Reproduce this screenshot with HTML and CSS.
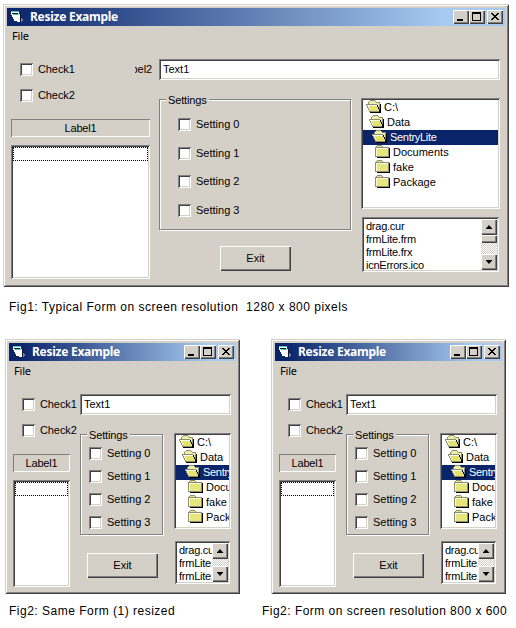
FILE: index.html
```html
<!DOCTYPE html>
<html lang="en">
<head>
<meta charset="utf-8">
<title>Resize Example</title>
<link rel="stylesheet" href="styles.css">
</head>
<body>
<svg class="defs" aria-hidden="true">
  <defs>
    <symbol id="closed" viewBox="0 0 16 14" shape-rendering="crispEdges">
      <path fill="#000" d="M14 3h1v10H2v-1h12z"/>
      <path fill="#8c8c78" d="M1 1h1V0h5v1h1v1h6v10H0V2h1z"/>
      <path fill="#e6e67c" d="M2 1h5v1H2zM1 3h12v8H1z"/>
      <path fill="#fafae0" d="M1 3h12v1H1zM1 3h1v8H1z"/>
    </symbol>
    <symbol id="open" viewBox="0 0 16 14" shape-rendering="crispEdges">
      <path fill="#000" d="M14 4h1v9H4v-1h10z"/>
      <path fill="#8c8c78" d="M3 1h1V0h5v1h1v1h4v10H3v-2H2V8H1V6H0V4h2V2h1z"/>
      <path fill="#eeeea4" d="M4 1h5v1h1v1h3v6h-1V6h-1V4H3V2h1z"/>
      <path fill="#e2e26c" d="M1 5h10v2h1v2h1v2H4V9H3V7H2V6H1z"/>
      <path fill="#fafae8" d="M1 5h10v1H1zM2 6h1v2H2zM3 8h1v2H3z"/>
      <path fill="#000" d="M11 5h1v2h1v2h1v3h-1V9h-1V7h-1z"/>
    </symbol>
    <symbol id="form" viewBox="0 0 15 12" shape-rendering="crispEdges">
      <path fill="#fff" d="M1 1h8v2h1v8H7v-1H4V8H3V6H2V4H1z"/>
      <path fill="#48c4c8" d="M1 0h8v1H1zM3 3h6v1H3z"/>
      <path fill="#10152c" d="M2 2h6v1H2zM10 3h1v8h-1z"/>
      <path fill="#7484a8" d="M11 7h1v1h1v2h-1v1h-1z"/>
    </symbol>
  </defs>
</svg>

<figure class="fig">
  <section class="window wide">
    <header class="title"><svg class="app"><use href="#form"/></svg><b>Resize Example</b>
      <i class="btn"><svg viewBox="0 0 12 10"><path d="M2 7h6v2H2z"/></svg></i><i class="btn"><svg viewBox="0 0 12 10"><path fill-rule="evenodd" d="M1 0h9v9H1zM2 2v6h7V2z"/></svg></i><i class="btn close"><svg viewBox="0 0 12 10"><path d="M2 1h2v1h1v1h2V2h1V1h2v1H9v1H8v1H7v1h1v1h1v1h1v1H8V7H7V6H5v1H4v1H2V7h1V6h1V5h1V4H4V3H3V2H2z"/></svg></i>
    </header>
    <nav class="menu">File</nav>
    <div class="form">
      <div class="left">
        <div class="check"><i></i>Check1<span class="clipped"><span>Label2</span></span></div>
        <div class="check"><i></i>Check2</div>
        <div class="label sunk">Label1</div>
        <div class="list inset"><div class="focus"></div></div>
      </div>
      <div class="right">
        <div class="text inset">Text1</div>
        <div class="cols">
          <div class="mid">
            <div class="group"><span class="legend">Settings</span>
              <div class="check"><i></i>Setting 0</div><div class="check"><i></i>Setting 1</div><div class="check"><i></i>Setting 2</div><div class="check"><i></i>Setting 3</div>
            </div>
            <div class="exit">Exit</div>
          </div>
          <div class="side">
            <div class="dirs inset">
              <div class="d0"><svg><use href="#open"/></svg>C:\</div><div class="d1"><svg><use href="#open"/></svg>Data</div><div class="d2 sel"><svg><use href="#open"/></svg>SentryLite</div><div class="d3"><svg><use href="#closed"/></svg>Documents</div><div class="d3"><svg><use href="#closed"/></svg>fake</div><div class="d3"><svg><use href="#closed"/></svg>Package</div>
            </div>
            <div class="files inset">
              <div class="names"><div>drag.cur</div><div>frmLite.frm</div><div>frmLite.frx</div><div>icnErrors.ico</div></div>
              <div class="scroll"><i class="sb"><b class="up"></b></i><i class="thumb"></i><i class="sb last"><b class="down"></b></i></div>
            </div>
          </div>
        </div>
      </div>
    </div>
  </section>
  <figcaption class="cap1">Fig1: Typical Form on screen resolution  1280 x 800 pixels</figcaption>
</figure>

<div class="pair">
  <figure class="fig">
    <section class="window narrow">
      <header class="title"><svg class="app"><use href="#form"/></svg><b>Resize Example</b>
        <i class="btn"><svg viewBox="0 0 12 10"><path d="M2 7h6v2H2z"/></svg></i><i class="btn"><svg viewBox="0 0 12 10"><path fill-rule="evenodd" d="M1 0h9v9H1zM2 2v6h7V2z"/></svg></i><i class="btn close"><svg viewBox="0 0 12 10"><path d="M2 1h2v1h1v1h2V2h1V1h2v1H9v1H8v1H7v1h1v1h1v1h1v1H8V7H7V6H5v1H4v1H2V7h1V6h1V5h1V4H4V3H3V2H2z"/></svg></i>
      </header>
      <nav class="menu">File</nav>
      <div class="form">
        <div class="left">
          <div class="check"><i></i>Check1</div>
          <div class="check"><i></i>Check2</div>
          <div class="label sunk">Label1</div>
          <div class="list inset"><div class="focus"></div></div>
        </div>
        <div class="right">
          <div class="text inset">Text1</div>
          <div class="cols">
            <div class="mid">
              <div class="group"><span class="legend">Settings</span>
                <div class="check"><i></i>Setting 0</div><div class="check"><i></i>Setting 1</div><div class="check"><i></i>Setting 2</div><div class="check"><i></i>Setting 3</div>
              </div>
              <div class="exit">Exit</div>
            </div>
            <div class="side">
              <div class="dirs inset">
                <div class="d0"><svg><use href="#open"/></svg>C:\</div><div class="d1"><svg><use href="#open"/></svg>Data</div><div class="d2 sel"><svg><use href="#open"/></svg>SentryLite</div><div class="d3"><svg><use href="#closed"/></svg>Documents</div><div class="d3"><svg><use href="#closed"/></svg>fake</div><div class="d3"><svg><use href="#closed"/></svg>Package</div>
              </div>
              <div class="files inset">
                <div class="names"><div>drag.cur</div><div>frmLite.frm</div><div>frmLite.frx</div></div>
                <div class="scroll"><i class="sb"><b class="up"></b></i><i class="sb last"><b class="down"></b></i></div>
              </div>
            </div>
          </div>
        </div>
      </div>
    </section>
    <figcaption class="cap2">Fig2: Same Form (1) resized</figcaption>
  </figure>
  <figure class="fig">
    <section class="window narrow">
      <header class="title"><svg class="app"><use href="#form"/></svg><b>Resize Example</b>
        <i class="btn"><svg viewBox="0 0 12 10"><path d="M2 7h6v2H2z"/></svg></i><i class="btn"><svg viewBox="0 0 12 10"><path fill-rule="evenodd" d="M1 0h9v9H1zM2 2v6h7V2z"/></svg></i><i class="btn close"><svg viewBox="0 0 12 10"><path d="M2 1h2v1h1v1h2V2h1V1h2v1H9v1H8v1H7v1h1v1h1v1h1v1H8V7H7V6H5v1H4v1H2V7h1V6h1V5h1V4H4V3H3V2H2z"/></svg></i>
      </header>
      <nav class="menu">File</nav>
      <div class="form">
        <div class="left">
          <div class="check"><i></i>Check1</div>
          <div class="check"><i></i>Check2</div>
          <div class="label sunk">Label1</div>
          <div class="list inset"><div class="focus"></div></div>
        </div>
        <div class="right">
          <div class="text inset">Text1</div>
          <div class="cols">
            <div class="mid">
              <div class="group"><span class="legend">Settings</span>
                <div class="check"><i></i>Setting 0</div><div class="check"><i></i>Setting 1</div><div class="check"><i></i>Setting 2</div><div class="check"><i></i>Setting 3</div>
              </div>
              <div class="exit">Exit</div>
            </div>
            <div class="side">
              <div class="dirs inset">
                <div class="d0"><svg><use href="#open"/></svg>C:\</div><div class="d1"><svg><use href="#open"/></svg>Data</div><div class="d2 sel"><svg><use href="#open"/></svg>SentryLite</div><div class="d3"><svg><use href="#closed"/></svg>Documents</div><div class="d3"><svg><use href="#closed"/></svg>fake</div><div class="d3"><svg><use href="#closed"/></svg>Package</div>
              </div>
              <div class="files inset">
                <div class="names"><div>drag.cur</div><div>frmLite.frm</div><div>frmLite.frx</div></div>
                <div class="scroll"><i class="sb"><b class="up"></b></i><i class="sb last"><b class="down"></b></i></div>
              </div>
            </div>
          </div>
        </div>
      </div>
    </section>
    <figcaption class="cap3">Fig2: Form on screen resolution 800 x 600</figcaption>
  </figure>
</div>
</body>
</html>
```
FILE: styles.css
```css
* { box-sizing: border-box; }
body {
  margin: 0;
  padding: 4px 0 0 3px;
  background: #fff;
  color: #000;
  font: 11px/13px "Liberation Sans", Arial, sans-serif;
  white-space: nowrap;
  overflow: hidden;
}
.defs { display: block; width: 0; height: 0; }
svg { display: block; flex: none; }
.fig { margin: 0; }
.pair { display: flex; gap: 31px; margin: 24px 0 0 2px; }
.pair .fig { width: 235px; }

figcaption { font-size: 12px; line-height: 16px; white-space: pre; }
.cap1 { margin: 12px 0 0 6px; letter-spacing: 0.5px; }
.cap2 { margin: 9px 0 0 4px; letter-spacing: 0.5px; }
.cap3 { margin: 9px 0 0 -9px; letter-spacing: 0.48px; }

.window {
  padding: 4px;
  background: #d4d0c8;
  box-shadow: inset 1px 1px #d4d0c8, inset -1px -1px #404040, inset 2px 2px #fff, inset -2px -2px #808080;
}
.wide { width: 506px; height: 283px; }
.narrow { width: 235px; height: 255px; }

.title {
  display: flex;
  align-items: center;
  height: 18px;
  padding: 0 2px 0 3px;
  background: linear-gradient(90deg, #0a246a, #a6caf0 88%);
  color: #fff;
}
.narrow .title { background: linear-gradient(90deg, #0a246a 5%, #a6caf0 88%); }
.title b { flex: 1; margin-left: 5px; font: bold 12px/18px "Noto Sans", sans-serif; letter-spacing: -0.27px; }
.app { width: 15px; height: 12px; }
.btn, .sb, .thumb {
  background: #d4d0c8;
  box-shadow: inset 1px 1px #fff, inset -1px -1px #404040, inset -2px -2px #808080;
}
.btn { width: 16px; height: 14px; padding: 2px; }
.btn svg { width: 12px; height: 10px; }
.close { margin-left: 2px; }

.menu { height: 20px; padding-left: 5px; font: 11px/20px "Noto Sans", sans-serif; letter-spacing: -0.2px; }
.form { display: flex; padding-left: 4px; }
.left { padding-top: 17px; }
.wide .left { width: 139px; margin-right: 9px; }
.narrow .left { width: 57px; margin-right: 10px; }

.check { display: flex; align-items: center; height: 13px; }
.check > i {
  flex: none;
  width: 13px;
  height: 13px;
  margin-right: 5px;
  background: #fff;
  box-shadow: inset 1px 1px #808080, inset -1px -1px #fff, inset 2px 2px #404040, inset -2px -2px #d4d0c8;
}
.left .check { padding-left: 9px; margin-bottom: 13px; letter-spacing: -0.1px; }
.clipped { display: flex; justify-content: flex-end; width: 17px; margin: 0 -2px 0 auto; overflow: hidden; }
.label { height: 18px; margin-top: 17px; line-height: 18px; text-align: center; letter-spacing: -0.2px; }
.sunk { box-shadow: inset 1px 1px #808080, inset -1px -1px #fff; }
.inset {
  padding: 2px;
  background: #fff;
  overflow: clip;
  overflow-clip-margin: content-box;
  box-shadow: inset 1px 1px #808080, inset -1px -1px #fff, inset 2px 2px #404040, inset -2px -2px #d4d0c8;
}
.list { margin-top: 8px; }
.wide .list { height: 134px; }
.narrow .list { height: 107px; }
.focus { height: 14px; border: 1px dotted #000; }

.right { padding-top: 13px; }
.text { height: 21px; padding-left: 4px; line-height: 17px; }
.wide .text { width: 341px; }
.narrow .text { width: 151px; }
.cols { display: flex; }
.mid { padding-top: 19px; }
.wide .mid { width: 202px; }
.narrow .mid { width: 94px; }
.group {
  position: relative;
  display: flex;
  flex-direction: column;
  border: 1px solid #808080;
  box-shadow: 1px 1px #fff, inset 1px 1px #fff;
}
.wide .group { width: 192px; height: 131px; padding: 18px 0 0 18px; gap: 15.7px; }
.narrow .group { width: 83px; height: 101px; padding: 12px 0 0 8px; gap: 10px; }
.legend { position: absolute; left: 6px; top: -6px; padding: 0 2px; background: #d4d0c8; letter-spacing: -0.15px; }
.exit {
  width: 71px;
  height: 25px;
  line-height: 24px;
  text-align: center;
  box-shadow: inset 1px 1px #fff, inset -1px -1px #404040, inset -2px -2px #808080;
}
.wide .exit { margin: 16px 0 0 61px; }
.narrow .exit { margin: 18px 0 0 7px; }

.side { padding-top: 18px; }
.wide .dirs { width: 139px; height: 111px; }
.narrow .dirs { width: 57px; height: 96px; }
.dirs div { display: flex; align-items: center; gap: 2px; height: 15px; line-height: 15px; }
.dirs svg { width: 16px; height: 14px; margin-bottom: 1px; }
.d0 { padding-left: 3px; }
.d1 { padding-left: 6px; }
.d2 { padding-left: 9px; }
.d3 { padding-left: 12px; }
.sel { background: #0a246a; color: #fff; letter-spacing: -0.3px; }

.files { display: flex; margin-left: 1px; letter-spacing: -0.25px; }
.wide .files { width: 137px; height: 55px; margin-top: 8px; }
.narrow .files { width: 55px; height: 43px; margin-top: 12px; }
.names { flex: 1; min-width: 0; padding: 1px 0 0 2px; overflow: hidden; }
.scroll {
  display: flex;
  flex-direction: column;
  width: 16px;
  background: repeating-conic-gradient(#fff 0 25%, #d4d0c8 0 50%) 0 0 / 2px 2px;
}
.sb { display: flex; align-items: center; justify-content: center; height: 16px; }
.thumb { height: 8px; }
.last { margin-top: auto; }
.up, .down { width: 7px; height: 4px; background: #000; }
.up { clip-path: polygon(50% 0, 100% 100%, 0 100%); }
.down { clip-path: polygon(0 0, 100% 0, 50% 100%); }
```
